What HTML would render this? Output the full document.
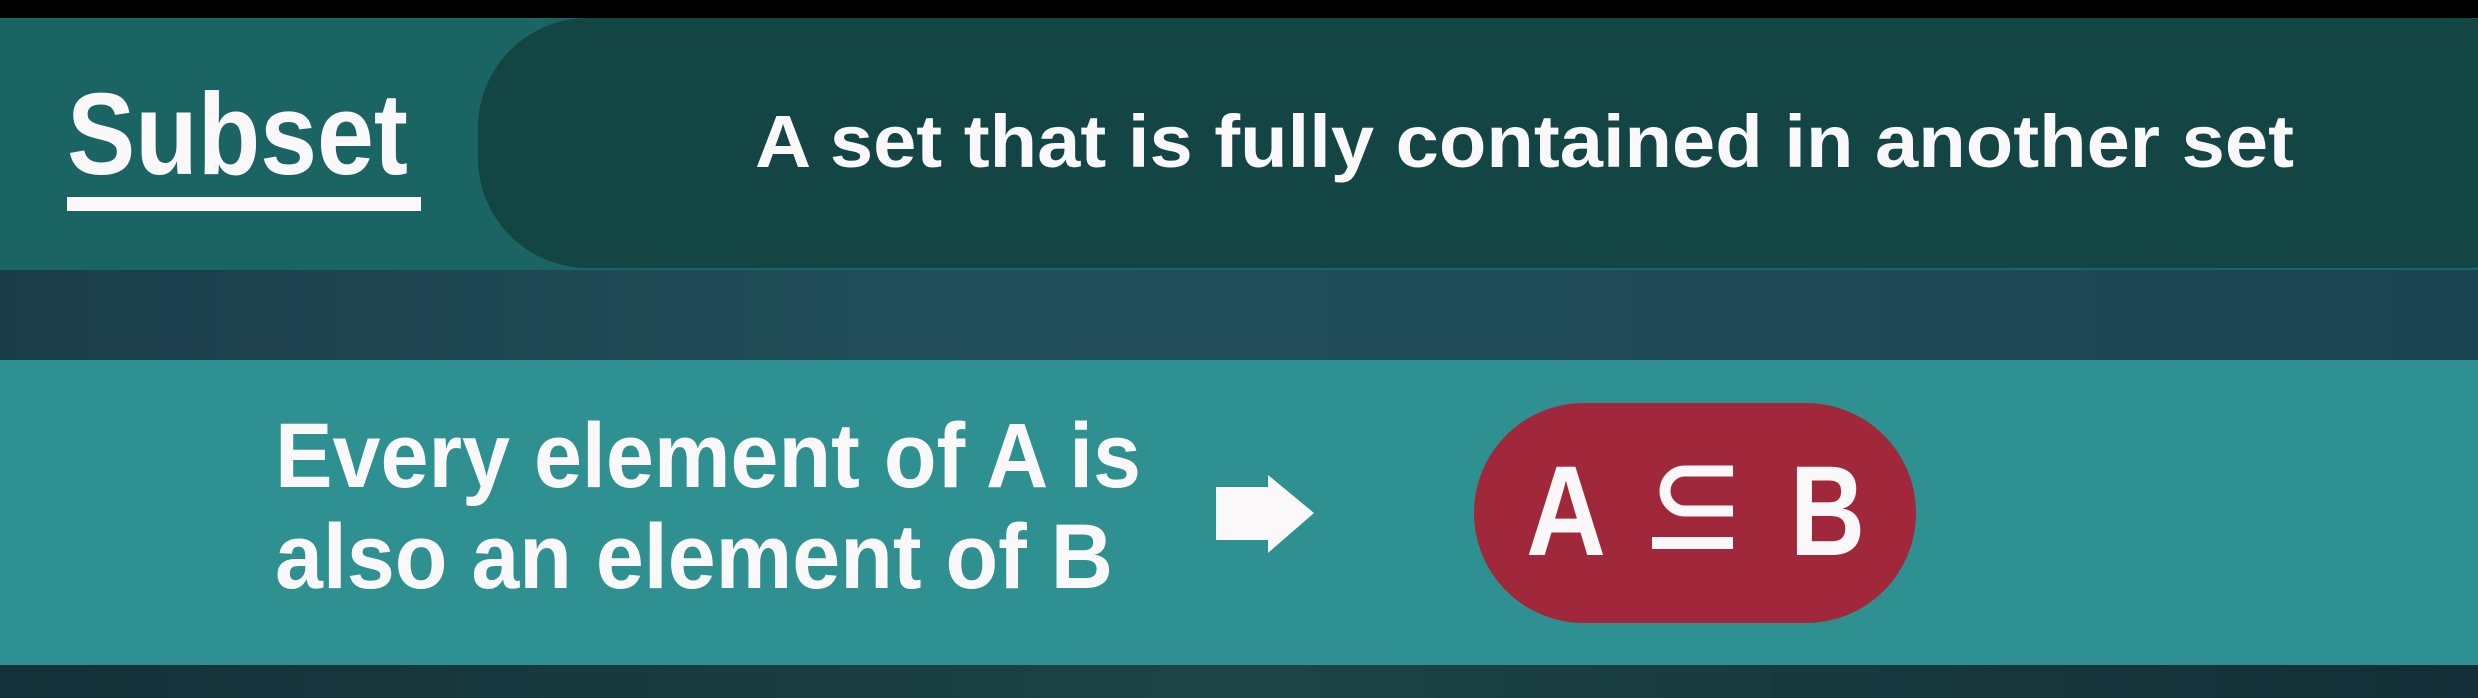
<!DOCTYPE html>
<html><head><meta charset="utf-8"><style>
html,body{margin:0;padding:0;background:#000;}
svg{display:block}
text{font-family:"Liberation Sans",sans-serif;font-weight:bold;fill:#fbf8fa}
</style></head><body>
<svg width="2478" height="698" viewBox="0 0 2478 698" xmlns="http://www.w3.org/2000/svg">
<defs>
<linearGradient id="mid" x1="0" x2="1" y1="0" y2="0">
<stop offset="0" stop-color="#1b3d4a"/><stop offset="0.4" stop-color="#22505a"/><stop offset="0.7" stop-color="#1f4a56"/><stop offset="1" stop-color="#1b4350"/>
</linearGradient>
<linearGradient id="bot" x1="0" x2="1" y1="0" y2="0">
<stop offset="0" stop-color="#143038"/><stop offset="0.5" stop-color="#1c4446"/><stop offset="1" stop-color="#132e36"/>
</linearGradient>
</defs>
<rect x="0" y="0" width="2478" height="698" fill="#000"/>
<rect x="0" y="18" width="2478" height="252" fill="#1b6464"/>
<rect x="478" y="18" width="2100" height="250" rx="110" ry="110" fill="#134545"/>
<rect x="0" y="270" width="2478" height="90" fill="url(#mid)"/>
<rect x="0" y="360" width="2478" height="305" fill="#2e9090"/>
<rect x="0" y="665" width="2478" height="33" fill="url(#bot)"/>

<text x="67" y="174" font-size="116" textLength="341" lengthAdjust="spacingAndGlyphs">Subset</text>
<rect x="67" y="197" width="354" height="14" fill="#fbf8fa"/>
<text x="755" y="167" font-size="74" textLength="1539" lengthAdjust="spacingAndGlyphs">A set that is fully contained in another set</text>

<text x="275" y="487" font-size="92" textLength="866" lengthAdjust="spacingAndGlyphs">Every element of A is</text>
<text x="275" y="588" font-size="92" textLength="838" lengthAdjust="spacingAndGlyphs">also an element of B</text>

<path d="M1216 487 H1268 V475 L1314 513 L1268 553 V540 H1216 Z" fill="#fbf8fa"/>

<rect x="1474" y="403" width="442" height="220" rx="110" ry="110" fill="#a0283a"/>
<text x="1526" y="555" font-size="128" textLength="80" lengthAdjust="spacingAndGlyphs">A</text>
<path d="M1733 471 H1685 A20 20 0 0 0 1685 511 H1733" fill="none" stroke="#fbf8fa" stroke-width="11"/>
<rect x="1652" y="537" width="81" height="12" fill="#fbf8fa"/>
<text x="1790" y="555" font-size="128" textLength="75" lengthAdjust="spacingAndGlyphs">B</text>
</svg>
</body></html>
